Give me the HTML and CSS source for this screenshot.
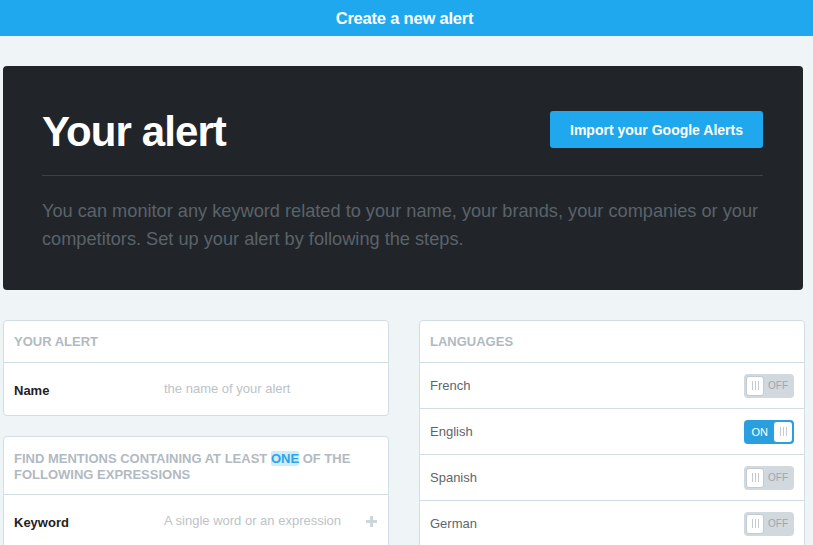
FILE: index.html
```html
<!DOCTYPE html>
<html>
<head>
<meta charset="utf-8">
<link rel="stylesheet" href="styles.css">
</head>
<body>
<header class="topbar">Create a new alert</header>
<main class="page">
  <section class="hero">
    <div class="hero-head">
      <h1 class="hero-title">Your alert</h1>
      <button class="import-btn">Import your Google Alerts</button>
    </div>
    <p class="hero-text">You can monitor any keyword related to your name, your brands, your companies or your competitors. Set up your alert by following the steps.</p>
  </section>
  <div class="columns">
    <div class="col">
      <div class="card">
        <div class="card-head">YOUR ALERT</div>
        <div class="field-row name-row">
          <span class="field-label">Name</span>
          <span class="field-input">the name of your alert</span>
        </div>
      </div>
      <div class="card">
        <div class="card-head two-line"><span>FIND MENTIONS CONTAINING AT LEAST</span> <span class="hl">ONE</span> <span>OF THE</span><br><span>FOLLOWING EXPRESSIONS</span></div>
        <div class="field-row keyword-row">
          <span class="field-label">Keyword</span>
          <span class="field-input">A single word or an expression</span>
          <svg class="plus" width="11" height="11" viewBox="0 0 11 11"><rect x="4" y="0" width="3" height="11" fill="#cdd6db"/><rect x="0" y="4" width="11" height="3" fill="#cdd6db"/></svg>
        </div>
      </div>
    </div>
    <div class="col">
      <div class="card">
        <div class="card-head">LANGUAGES</div>
        <div class="lang-row"><span class="lang">French</span><span class="toggle off"><span class="knob"><i></i><i></i><i></i></span><span class="tlabel">OFF</span></span></div>
        <div class="lang-row"><span class="lang">English</span><span class="toggle on"><span class="tlabel">ON</span><span class="knob"><i></i><i></i><i></i></span></span></div>
        <div class="lang-row"><span class="lang">Spanish</span><span class="toggle off"><span class="knob"><i></i><i></i><i></i></span><span class="tlabel">OFF</span></span></div>
        <div class="lang-row"><span class="lang">German</span><span class="toggle off"><span class="knob"><i></i><i></i><i></i></span><span class="tlabel">OFF</span></span></div>
      </div>
    </div>
  </div>
</main>
</body>
</html>
```

FILE: styles.css
```css
* { box-sizing: border-box; }
html, body { margin: 0; padding: 0; }
body {
  background: #eff4f7;
  font-family: "Liberation Sans", Arial, sans-serif;
  width: 813px;
  height: 545px;
  overflow: hidden;
}
.topbar {
  height: 36px;
  background: #1fa8ee;
  color: #fff;
  font-weight: bold;
  font-size: 16.5px;
  display: flex;
  align-items: center;
  justify-content: center;
  letter-spacing: -0.2px;
  padding-right: 4px;
}
.page {
  padding: 30px 8px 0 3px;
  width: 813px;
}
.hero {
  width: 800px;
  background: #212529;
  border-radius: 4px;
  padding: 45px 40px 37px 39px;
}
.hero-head {
  display: flex;
  justify-content: space-between;
  align-items: center;
  height: 37px;
}
.hero-title {
  margin: 0;
  color: #fff;
  font-size: 42px;
  font-weight: bold;
  letter-spacing: -0.9px;
  line-height: 37px;
  position: relative;
  top: 2px;
}
.import-btn {
  background: #1fa8ee;
  border: 0;
  border-radius: 3px;
  color: #fff;
  font-family: "Liberation Sans", Arial, sans-serif;
  font-weight: bold;
  font-size: 14px;
  height: 37px;
  width: 213px;
  padding: 0;
}
.hero-text {
  margin: 27px 0 0 0;
  border-top: 1px solid #3c4247;
  padding-top: 21px;
  color: #5b6269;
  font-size: 18.2px;
  line-height: 28px;
}
.columns {
  display: flex;
  gap: 30px;
  margin-top: 30px;
  width: 802px;
}
.col {
  width: 386px;
  display: flex;
  flex-direction: column;
  gap: 20px;
}
.card {
  background: #fff;
  border: 1px solid #d3dee4;
  border-radius: 4px;
}
.card-head {
  height: 42px;
  padding: 0 10px;
  display: flex;
  align-items: center;
  color: #b2bac1;
  font-weight: bold;
  font-size: 13px;
  border-bottom: 1px solid #d3dee4;
}
.card-head.two-line {
  display: block;
  height: 58px;
  padding: 14px 10px 0 10px;
  line-height: 16px;
}
.hl {
  background: #d2ebfa;
  color: #2ba4e9;
  border-radius: 2px;
}
.field-row {
  display: flex;
  align-items: center;
  padding: 0 10px;
  height: 52px;
}
.keyword-row { height: 52px; }
.field-label {
  width: 150px;
  font-weight: bold;
  font-size: 13px;
  color: #222;
  position: relative;
  top: 1px;
}
.field-input {
  flex: 1;
  font-size: 13px;
  color: #bcc3c8;
  position: relative;
  top: -1px;
}
.plus { margin-right: 1px; }
.lang-row {
  height: 46px;
  display: flex;
  align-items: center;
  justify-content: space-between;
  padding: 0 10px;
  border-bottom: 1px solid #d3dee4;
}
.lang {
  font-size: 13px;
  color: #5e656b;
}
.toggle {
  width: 50px;
  height: 24px;
  border-radius: 4px;
  display: flex;
  align-items: center;
  padding: 0 2px;
  gap: 4px;
  font-size: 10px;
}
.toggle.off { background: #d1d8de; }
.toggle.on { background: #2a9fe0; justify-content: flex-end; gap: 6px; }
.knob {
  width: 18px;
  height: 20px;
  background: #fff;
  border-radius: 3px;
  display: flex;
  align-items: center;
  justify-content: center;
  gap: 2px;
}
.toggle.off .knob { border: 1px solid #c2cbd2; }
.knob i {
  display: block;
  width: 1px;
  height: 9px;
  background: #c3cbd1;
}
.tlabel { color: #9ea7ae; }
.toggle.on .tlabel { color: #fff; font-size: 11px; }
```
